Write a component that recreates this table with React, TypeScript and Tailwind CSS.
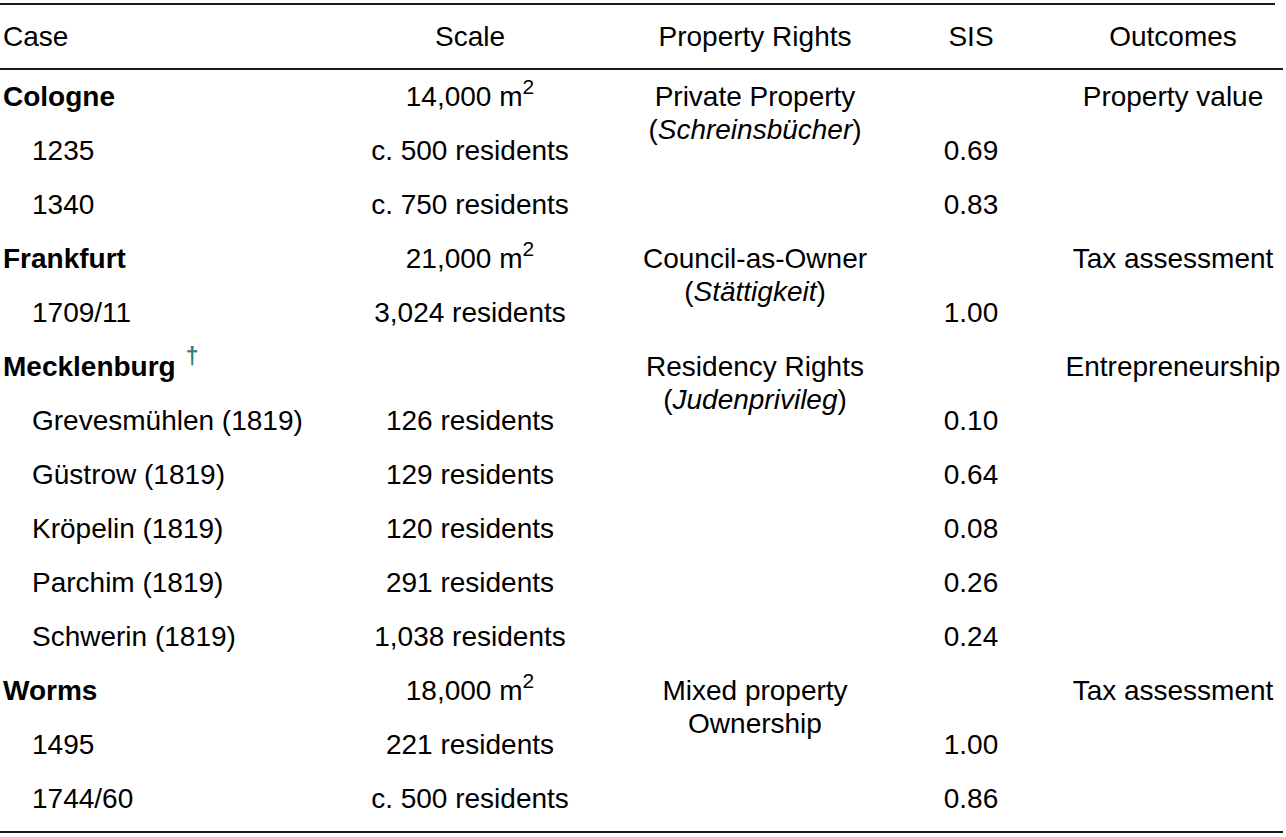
import React from "react";

type Sub = { name: string; scale: string; sis: string };

type Group = {
  name: React.ReactNode;
  scale: React.ReactNode;
  rights: React.ReactNode;
  outcome: string;
  rows: Sub[];
};

const groups: Group[] = [
  {
    name: "Cologne",
    scale: (
      <>
        14,000 m<sup>2</sup>
      </>
    ),
    rights: (
      <>
        Private Property
        <br />(<i>Schreinsbücher</i>)
      </>
    ),
    outcome: "Property value",
    rows: [
      { name: "1235", scale: "c. 500 residents", sis: "0.69" },
      { name: "1340", scale: "c. 750 residents", sis: "0.83" },
    ],
  },
  {
    name: "Frankfurt",
    scale: (
      <>
        21,000 m<sup>2</sup>
      </>
    ),
    rights: (
      <>
        Council-as-Owner
        <br />(<i>Stättigkeit</i>)
      </>
    ),
    outcome: "Tax assessment",
    rows: [{ name: "1709/11", scale: "3,024 residents", sis: "1.00" }],
  },
  {
    name: (
      <>
        Mecklenburg
        <span className="ml-[10px] font-semibold text-[23px] text-[#2f7d7b] relative -top-[11px]">†</span>
      </>
    ),
    scale: "",
    rights: (
      <>
        Residency Rights
        <br />(<i>Judenprivileg</i>)
      </>
    ),
    outcome: "Entrepreneurship",
    rows: [
      { name: "Grevesmühlen (1819)", scale: "126 residents", sis: "0.10" },
      { name: "Güstrow (1819)", scale: "129 residents", sis: "0.64" },
      { name: "Kröpelin (1819)", scale: "120 residents", sis: "0.08" },
      { name: "Parchim (1819)", scale: "291 residents", sis: "0.26" },
      { name: "Schwerin (1819)", scale: "1,038 residents", sis: "0.24" },
    ],
  },
  {
    name: "Worms",
    scale: (
      <>
        18,000 m<sup>2</sup>
      </>
    ),
    rights: (
      <>
        Mixed property
        <br />
        Ownership
      </>
    ),
    outcome: "Tax assessment",
    rows: [
      { name: "1495", scale: "221 residents", sis: "1.00" },
      { name: "1744/60", scale: "c. 500 residents", sis: "0.86" },
    ],
  },
];

const Cell = ({ children, className = "" }: { children?: React.ReactNode; className?: string }) => (
  <div className={`h-[54px] flex items-center whitespace-nowrap ${className}`}>{children}</div>
);

const GroupBlock = ({ g }: { g: Group }) => (
  <div className="flex">
    <div className="w-[330px] flex flex-col">
      <Cell className="pl-[3px] font-bold">{g.name}</Cell>
      {g.rows.map((r) => (
        <Cell key={r.name} className="pl-[32px]">
          {r.name}
        </Cell>
      ))}
    </div>
    <div className="w-[280px] flex flex-col">
      <Cell className="justify-center">{g.scale}</Cell>
      {g.rows.map((r) => (
        <Cell key={r.name} className="justify-center">
          {r.scale}
        </Cell>
      ))}
    </div>
    <div className="w-[290px] pt-[10px] text-center leading-[33px] whitespace-nowrap">{g.rights}</div>
    <div className="w-[142px] flex flex-col">
      <Cell />
      {g.rows.map((r) => (
        <Cell key={r.name} className="justify-center">
          {r.sis}
        </Cell>
      ))}
    </div>
    <div className="w-[241px] pl-[21px]">
      <Cell className="justify-center">{g.outcome}</Cell>
    </div>
  </div>
);

export default function App() {
  return (
    <div
      className="bg-white text-black text-[28px] w-[1286px] h-[837px] pt-[3px]"
      style={{ fontFamily: '"Liberation Sans", Arial, sans-serif' }}
    >
      <div className="w-[1275px] h-[2px] bg-[#1a1a1a]" />
      <div className="w-[1283px]">
        <div className="flex h-[63px] items-center">
          <div className="w-[330px] pl-[3px]">Case</div>
          <div className="w-[280px] text-center">Scale</div>
          <div className="w-[290px] text-center">Property Rights</div>
          <div className="w-[142px] text-center">SIS</div>
          <div className="w-[241px] pl-[21px] text-center">Outcomes</div>
        </div>
        <div className="h-[2px] bg-[#1a1a1a]" />
        {groups.map((g, i) => (
          <GroupBlock key={i} g={g} />
        ))}
        <div className="h-[2px] bg-[#1a1a1a] mt-[5px]" />
      </div>
    </div>
  );
}
